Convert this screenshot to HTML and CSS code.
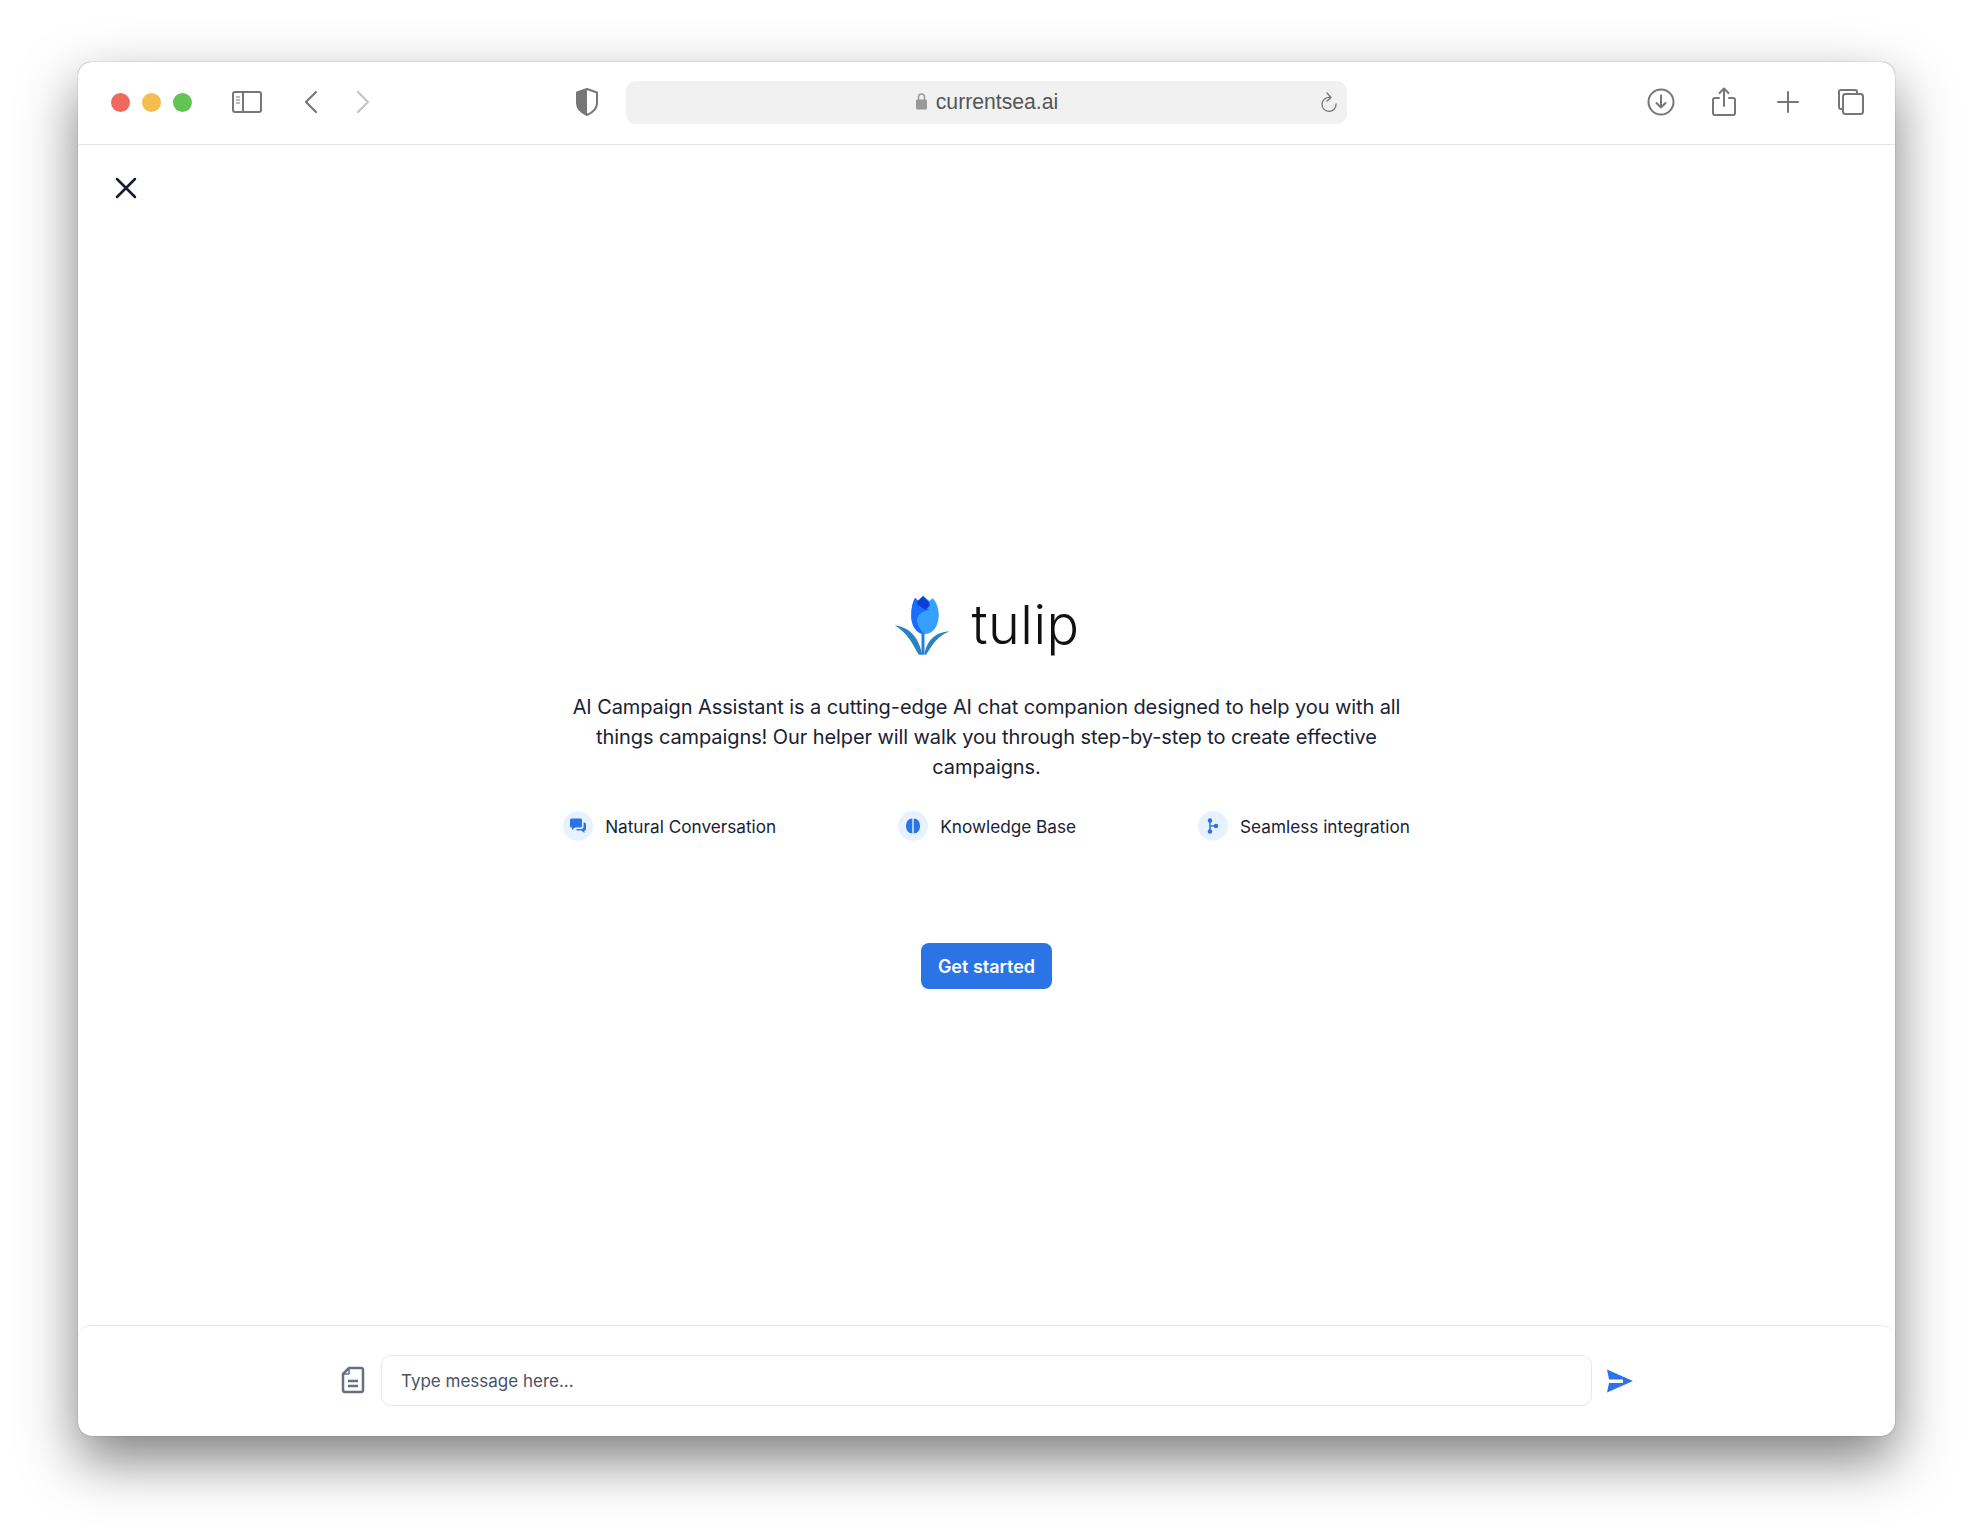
FILE: index.html
```html
<!DOCTYPE html>
<html lang="en">
<head>
    <meta charset="UTF-8">
    <title>Tulip - currentsea.ai</title>
    <link rel="stylesheet" href="styles.css">
</head>
<body>

    <div class="window">
        <!-- browser toolbar -->
        <div class="toolbar">
            <div class="lights">
                <span class="light red"></span>
                <span class="light yellow"></span>
                <span class="light green"></span>
            </div>
            <svg class="sidebar-icon" width="32" height="24" viewBox="0 0 32 24" fill="none" stroke="#777" stroke-width="2">
                <rect x="2" y="2" width="28" height="20" rx="2"/>
                <path d="M12 2v20"/>
                <path d="M5 7h4M5 10h4M5 13h4" stroke-width="1.2"/>
            </svg>
            <svg class="back-icon" width="14" height="24" viewBox="0 0 14 24" fill="none" stroke="#777" stroke-width="2.2" stroke-linecap="round" stroke-linejoin="round">
                <path d="M12 2 2 12l10 10"/>
            </svg>
            <svg class="forward-icon" width="14" height="24" viewBox="0 0 14 24" fill="none" stroke="#c4c4c4" stroke-width="2.2" stroke-linecap="round" stroke-linejoin="round">
                <path d="M2 2l10 10L2 22"/>
            </svg>
            <svg class="shield-icon" width="24" height="28" viewBox="0 0 24 28">
                <path d="M12 1 22 4.500V15c0 5-4 9.500-10 12C6 24.500 2 20 2 15V4.500Z" fill="#fff" stroke="#777" stroke-width="2" stroke-linejoin="round"/>
                <path d="M12 1 2 4.500V15c0 5 4 9.500 10 12Z" fill="#777"/>
            </svg>
            <div class="address-bar">
                <svg width="13" height="18" viewBox="0 0 13 18" fill="none">
                    <path d="M3.500 8V5a3 3 0 0 1 6 0v3" stroke="#999" stroke-width="1.500"/>
                    <rect x="1" y="7.500" width="11" height="10" rx="1.500" fill="#999"/>
                </svg>
                <span class="address-text">currentsea.ai</span>
                <svg class="reload-icon" width="18" height="22" viewBox="0 0 18 22" fill="none" stroke="#777" stroke-width="1.300" stroke-linecap="round" stroke-linejoin="round">
                    <path d="M10 5.500A7 7 0 1 0 16 12"/>
                    <path d="M7 1l4 4.500L7 9"/>
                </svg>
            </div>
            <div class="toolbar-right">
                <span class="tool">
                    <svg width="28" height="28" viewBox="0 0 28 28" fill="none" stroke="#777" stroke-width="2" stroke-linecap="round" stroke-linejoin="round">
                        <circle cx="14" cy="14" r="12.500"/>
                        <path d="M14 7.500v12M9.500 15l4.500 4.500 4.500-4.500"/>
                    </svg>
                </span>
                <span class="tool">
                    <svg width="26" height="30" viewBox="0 0 26 30" fill="none" stroke="#777" stroke-width="2" stroke-linecap="round" stroke-linejoin="round">
                        <path d="M8 11H4a2 2 0 0 0-2 2v13a2 2 0 0 0 2 2h18a2 2 0 0 0 2-2V13a2 2 0 0 0-2-2h-4"/>
                        <path d="M13 19V2M8.500 6 13 1.500 17.500 6"/>
                    </svg>
                </span>
                <span class="tool">
                    <svg width="22" height="22" viewBox="0 0 22 22" fill="none" stroke="#777" stroke-width="2" stroke-linecap="round">
                        <path d="M11 1v20M1 11h20"/>
                    </svg>
                </span>
                <span class="tool">
                    <svg width="28" height="28" viewBox="0 0 28 28" fill="none" stroke="#777" stroke-width="2">
                        <path d="M6 21H4a2 2 0 0 1-2-2V4a2 2 0 0 1 2-2h14a2 2 0 0 1 2 2v2"/>
                        <rect x="6" y="6" width="20" height="20" rx="2.500"/>
                    </svg>
                </span>
            </div>
        </div>

        <!-- page -->
        <div class="main">
            <svg class="close-icon" width="22" height="22" viewBox="0 0 22 22" fill="none" stroke="#141c2e" stroke-width="2.500" stroke-linecap="round">
                <path d="M2 2l18 18M20 2 2 20"/>
            </svg>

            <div class="intro">
                <div class="logo">
                    <svg width="58" height="62" viewBox="40 50 175 185">
                        <path d="M45 143C85 148 118 175 128 232H118C100 205 90 170 45 143Z" fill="#2a82c0"/>
                        <path d="M210 162C170 162 140 190 135 232H140C160 200 175 175 210 162Z" fill="#2a82c0"/>
                        <rect x="126" y="165" width="9" height="67" fill="#1e80e8"/>
                        <path d="M136 170C160 170 178 145 178 112 178 92 170 72 160 62L150 70 131 55 113 70 105 62C98 75 95 95 95 115 95 145 112 170 136 170Z" fill="#35a0ff"/>
                        <path d="M107 60 131 85 150 97C125 100 105 115 115 140 118 150 125 160 135 170 112 170 95 145 95 115 95 95 98 75 107 60Z" fill="#1a6dff"/>
                        <path d="M131 55 150 75V85L138 97 113 80V72Z" fill="#0a3fd8"/>
                    </svg>
                    <span class="logo-text">tulip</span>
                </div>

                <p class="description">AI Campaign Assistant is a cutting-edge AI chat companion designed to help you with all things campaigns! Our helper will walk you through step-by-step to create effective campaigns.</p>

                <div class="features">
                    <div class="feature">
                        <span class="feature-icon">
                            <svg width="18" height="18" viewBox="0 0 18 18" fill="#2b74e6">
                                <path d="M1 3a1.500 1.500 0 0 1 1.500-1.500h9A1.500 1.500 0 0 1 13 3v6a1.500 1.500 0 0 1-1.500 1.500H6L3 13v-2.500h-.5A1.500 1.500 0 0 1 1 9Z"/>
                                <path d="M14.500 5.500h1A1.500 1.500 0 0 1 17 7v5a1.500 1.500 0 0 1-1.500 1.500V16l-3-2.500H8l-1-1.500h5.500a2 2 0 0 0 2-2Z"/>
                            </svg>
                        </span>
                        <span>Natural Conversation</span>
                    </div>
                    <div class="feature">
                        <span class="feature-icon">
                            <svg width="18" height="18" viewBox="0 0 18 18" fill="#2b74e6">
                                <path d="M8.300 1.500V16.500C4.500 16.500 2 13.500 2 9S4.500 1.500 8.300 1.500Z"/>
                                <path d="M9.700 1.500V16.500C13.500 16.500 16 13.500 16 9S13.500 1.500 9.700 1.500Z"/>
                            </svg>
                        </span>
                        <span>Knowledge Base</span>
                    </div>
                    <div class="feature">
                        <span class="feature-icon">
                            <svg width="18" height="18" viewBox="0 0 18 18" fill="#2b74e6" stroke="#2b74e6" stroke-width="1.500">
                                <path d="M6 3.500v11M6 9c0 0 1 0 2 0h4" fill="none"/>
                                <circle cx="6" cy="3.500" r="1.500"/>
                                <circle cx="6" cy="14.500" r="1.500"/>
                                <circle cx="12" cy="9" r="1.500"/>
                            </svg>
                        </span>
                        <span>Seamless integration</span>
                    </div>
                </div>

                <button class="start-btn">Get started</button>
            </div>
        </div>

        <!-- message box -->
        <div class="composer">
            <svg class="doc-icon" width="24" height="28" viewBox="0 0 24 28" fill="none" stroke="#667085" stroke-width="2.500" stroke-linejoin="round">
                <path d="M8 2h12a2 2 0 0 1 2 2v20a2 2 0 0 1-2 2H4a2 2 0 0 1-2-2V8Z"/>
                <path d="M8 2v6H2" stroke-width="1.500"/>
                <path d="M7 15h10M7 20h10"/>
            </svg>
            <div class="message-input">Type message here...</div>
            <svg class="send-icon" width="28" height="24" viewBox="0 0 28 24">
                <path d="M1 0.500 27 12 1 23.500 3 14H17V10.500H3Z" fill="#2b74e6"/>
            </svg>
        </div>
    </div>

</body>
</html>
```

FILE: styles.css
```css
html, body {
    margin: 0;
    height: 100%;
}

body {
    box-sizing: border-box;
    padding: 62px 78px 93px;
    background-color: #ffffff;
    font-family: Inter, Arial, sans-serif;
    color: #1a2233;
}

.window {
    height: 100%;
    display: flex;
    flex-direction: column;
    background-color: #ffffff;
    border-radius: 14px;
    box-shadow: 0 24px 55px rgba(0, 0, 0, 0.5), 0 0 1px rgba(0, 0, 0, 0.6);
}

.toolbar {
    height: 82px;
    flex-shrink: 0;
    display: flex;
    align-items: center;
    padding: 0 30px 0 33px;
    border-bottom: 1px solid #e6e6e6;
}

.lights {
    display: flex;
    gap: 12px;
    margin-bottom: 2px;
}

.light {
    width: 19px;
    height: 19px;
    border-radius: 50%;
}

.red { background-color: #ee6a5f; }
.yellow { background-color: #f5bd4f; }
.green { background-color: #61c454; }

.toolbar svg {
    margin-bottom: 2px;
}

.sidebar-icon {
    margin-left: 39px;
}

.back-icon {
    margin-left: 41px;
}

.forward-icon {
    margin-left: 38px;
}

.shield-icon {
    margin-left: 205px;
}

.address-bar {
    width: 721px;
    height: 43px;
    margin: 0 0 2px 27px;
    position: relative;
    display: flex;
    align-items: center;
    justify-content: center;
    gap: 8px;
    background-color: #f1f1f1;
    border-radius: 10px;
}

.address-text {
    font-family: "Liberation Sans", Arial, sans-serif;
    font-size: 21.2px;
    color: #555555;
}

.reload-icon {
    position: absolute;
    right: 9px;
    top: 11px;
}

.toolbar-right {
    flex: 1;
    display: flex;
    align-items: center;
    justify-content: flex-end;
    gap: 35.5px;
}

.tool {
    width: 28px;
    display: flex;
    justify-content: center;
}

.main {
    flex: 1;
    display: flex;
    flex-direction: column;
    padding: 32px 37px 0;
}

.close-icon {
    align-self: flex-start;
}

.intro {
    display: flex;
    flex-direction: column;
    align-items: center;
    margin-top: 395px;
}

.logo {
    display: flex;
    align-items: center;
    gap: 20px;
}

.logo-text {
    font-family: Inter, Arial, sans-serif;
    font-weight: 300;
    font-size: 54px;
    letter-spacing: 0.5px;
    line-height: 60px;
    color: #111111;
}

.description {
    width: 840px;
    margin: 36px 0 0;
    text-align: center;
    font-size: 20px;
    letter-spacing: -0.09px;
    line-height: 30px;
}

.features {
    display: flex;
    gap: 122px;
    margin-top: 29px;
    font-size: 17.2px;
}

.feature {
    display: flex;
    align-items: center;
    gap: 12px;
}

.feature-icon {
    width: 30px;
    height: 30px;
    display: flex;
    align-items: center;
    justify-content: center;
    background-color: #e8f2ff;
    border-radius: 50%;
}

.start-btn {
    width: 131px;
    height: 46px;
    margin-top: 102px;
    background-color: #2b74e6;
    color: #ffffff;
    border: none;
    border-radius: 8px;
    font-family: Inter, Arial, sans-serif;
    font-size: 18px;
    font-weight: 600;
}

.composer {
    height: 111px;
    flex-shrink: 0;
    box-sizing: border-box;
    display: flex;
    align-items: flex-start;
    justify-content: center;
    gap: 15px;
    padding-top: 29px;
    border-top: 1px solid #e8e8e8;
    border-radius: 14px 14px 0 0;
}

.doc-icon {
    margin: 11px 1px 0 3px;
}

.send-icon {
    margin: 14px 1px 0 -1px;
}

.message-input {
    box-sizing: border-box;
    width: 1211px;
    height: 51px;
    padding: 0 19px;
    display: flex;
    align-items: center;
    border: 1px solid #e6e8ec;
    border-radius: 10px;
    font-size: 17px;
    color: #475467;
}
```
